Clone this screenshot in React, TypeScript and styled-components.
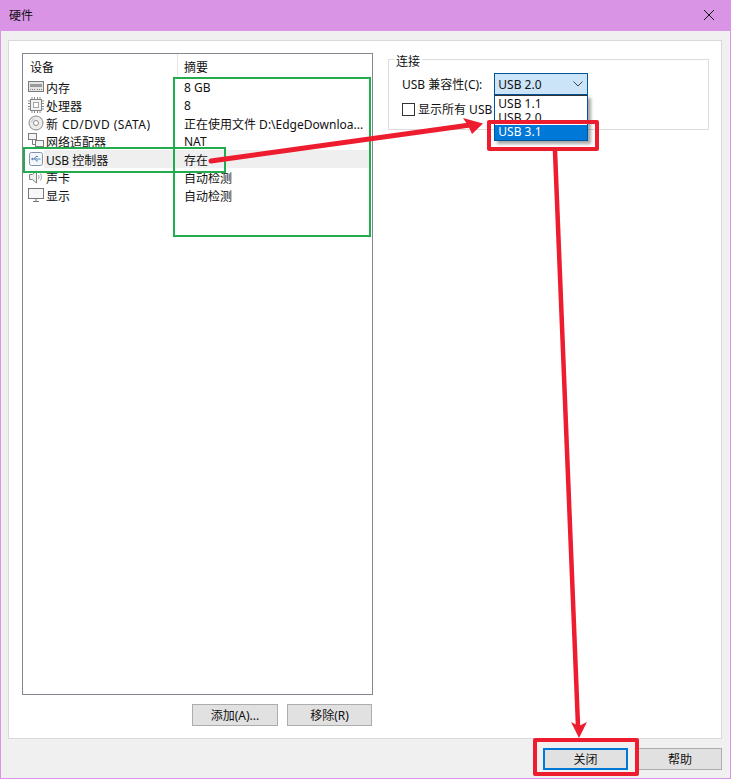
import React from 'react';
import styled, { createGlobalStyle } from 'styled-components';

const GlobalStyle = createGlobalStyle`
  html, body {
    margin: 0;
    padding: 0;
    background: #f0f0f0;
  }
  * {
    box-sizing: border-box;
  }
`;

const MemoryIcon = () => (
  <svg width="16" height="16" viewBox="0 0 16 16" fill="none">
    <rect x="0.5" y="2.5" width="15" height="10" fill="#e4e4e4" stroke="#7d7d7d" />
    <rect x="2" y="5" width="12" height="3" fill="#9a9a9a" />
    <path d="M2 10.5h1M4 10.5h1M6 10.5h1M9 10.5h1M11 10.5h1M13 10.5h1" stroke="#7d7d7d" />
  </svg>
);

const CpuIcon = () => (
  <svg width="16" height="16" viewBox="0 0 16 16" fill="none">
    <rect x="2.5" y="2.5" width="11" height="11" fill="#f2f2f2" stroke="#858585" />
    <rect x="5.5" y="5.5" width="5" height="5" fill="#fff" stroke="#a5a5a5" />
    <path
      d="M4 0v2M6.500 0v2M9.500 0v2M12 0v2M4 14v2M6.500 14v2M9.500 14v2M12 14v2M0 4h2M0 6.500h2M0 9.500h2M0 12h2M14 4h2M14 6.500h2M14 9.500h2M14 12h2"
      stroke="#8c8c8c"
    />
  </svg>
);

const DiscIcon = () => (
  <svg width="16" height="16" viewBox="0 0 16 16" fill="none">
    <circle cx="8" cy="8" r="7" fill="#ececec" stroke="#8a8a8a" />
    <circle cx="8" cy="8" r="2.500" fill="#fff" stroke="#8a8a8a" />
    <path d="M3.500 7a4.500 4.500 0 0 1 3-3.500" stroke="#bdbdbd" />
  </svg>
);

const NetworkIcon = () => (
  <svg width="16" height="16" viewBox="0 0 16 16" fill="none">
    <rect x="0.5" y="0.5" width="8" height="6" fill="#f4f4f4" stroke="#7d7d7d" />
    <rect x="7.500" y="7.500" width="8" height="6" fill="#f4f4f4" stroke="#7d7d7d" />
    <path d="M4.500 6.500v5h3M2 14.500h5M11.500 13.500v2" stroke="#7d7d7d" />
  </svg>
);

const UsbIcon = () => (
  <svg width="16" height="16" viewBox="0 0 16 16" fill="none">
    <rect x="1.500" y="1.500" width="13" height="13" rx="2" fill="#f3f7fb" stroke="#7f95ad" />
    <path d="M3.500 8h9M6 8l2-2.500h2M7 8l1.500 2h1.500" stroke="#5b86b3" />
    <path d="M3 8l2-1.500v3z" fill="#5b86b3" />
  </svg>
);

const SpeakerIcon = () => (
  <svg width="16" height="16" viewBox="0 0 16 16" fill="none">
    <path d="M1.500 5.500h3l4-3.500v12l-4-3.500h-3z" fill="#f0f0f0" stroke="#858585" />
    <path d="M10.500 6c.7 1.300.7 2.700 0 4M12.500 4.500c1.200 2.200 1.200 4.800 0 7" stroke="#a0a0a0" />
  </svg>
);

const MonitorIcon = () => (
  <svg width="16" height="16" viewBox="0 0 16 16" fill="none">
    <rect x="0.500" y="1.500" width="15" height="10" fill="#f7f7f7" stroke="#777" />
    <path d="M5 14.500h6M8 11.500v3" stroke="#777" />
  </svg>
);

const devices = [
  { icon: <MemoryIcon />, name: '内存', summary: '8 GB' },
  { icon: <CpuIcon />, name: '处理器', summary: '8' },
  { icon: <DiscIcon />, name: '新 CD/DVD (SATA)', summary: '正在使用文件 D:\\EdgeDownloa...', wide: true },
  { icon: <NetworkIcon />, name: '网络适配器', summary: 'NAT' },
  { icon: <UsbIcon />, name: 'USB 控制器', summary: '存在', selected: true },
  { icon: <SpeakerIcon />, name: '声卡', summary: '自动检测' },
  { icon: <MonitorIcon />, name: '显示', summary: '自动检测' },
];

export default function App() {
  return (
    <>
      <GlobalStyle />
      <Win>
        <TitleBar>
          <span>硬件</span>
          <svg width="12" height="12" viewBox="0 0 12 12" fill="none">
            <path d="M1 1l10 10M11 1L1 11" stroke="#111" />
          </svg>
        </TitleBar>
        <Body>
          <Panel>
            <LeftCol>
              <DeviceList>
                <HeaderRow>
                  <HeaderCell>设备</HeaderCell>
                  <HeaderCell $second>摘要</HeaderCell>
                </HeaderRow>
                {devices.map((d) => (
                  <Row key={d.name}>
                    <IconSlot>{d.icon}</IconSlot>
                    <RowBand $selected={d.selected}>
                      <NameCell $wide={d.wide}>{d.name}</NameCell>
                      <SummaryCell>{d.summary}</SummaryCell>
                    </RowBand>
                  </Row>
                ))}
              </DeviceList>
              <ListButtons>
                <Btn $w={86}>添加(A)...</Btn>
                <Btn>移除(R)</Btn>
              </ListButtons>
            </LeftCol>
            <Group>
              <Legend>连接</Legend>
              <ComboRow>
                <span>USB 兼容性(C):</span>
                <Combo>
                  <span>USB 2.0</span>
                  <svg width="10" height="6" viewBox="0 0 10 6" fill="none">
                    <path d="M0.500 0.500L5 5l4.500-4.500" stroke="#444" />
                  </svg>
                  <Popup>
                    <PopupItem>USB 1.1</PopupItem>
                    <PopupItem>USB 2.0</PopupItem>
                    <PopupItem $active>USB 3.1</PopupItem>
                  </Popup>
                </Combo>
              </ComboRow>
              <CheckRow>
                <CheckBox />
                <span>显示所有 USB 输入设备</span>
              </CheckRow>
            </Group>
          </Panel>
          <Footer>
            <Btn $primary>关闭</Btn>
            <Btn $w={84}>帮助</Btn>
          </Footer>
        </Body>
        <GreenBox $x={173} $y={77} $w={198} $h={160} />
        <GreenBox $x={23} $y={147} $w={203} $h={26} />
        <RedBox $x={487} $y={120} $w={112} $h={31} />
        <RedBox $x={533} $y={738} $w={106} $h={38} />
        <ArrowLayer width="731" height="779" viewBox="0 0 731 779" fill="none">
          <path d="M211 161L470 125" stroke="#ed1c2e" strokeWidth="5" strokeLinecap="round" />
          <path d="M483 123.500L463 118L468 125.500L472 134z" fill="#ed1c2e" />
          <path d="M555 151L578 726" stroke="#ed1c2e" strokeWidth="4.500" />
          <path d="M579 738L571 722L579 726L587 722z" fill="#ed1c2e" />
        </ArrowLayer>
      </Win>
    </>
  );
}

const Win = styled.div`
  position: relative;
  display: flex;
  flex-direction: column;
  width: 731px;
  height: 779px;
  overflow: hidden;
  background: #f0f0f0;
  border: 1px solid #da94e6;
  border-top: 0;
  font-family: 'Noto Sans', 'Noto Sans CJK SC', sans-serif;
  font-size: 12px;
  color: #111;
`;

const TitleBar = styled.div`
  display: flex;
  flex: 0 0 31px;
  align-items: center;
  justify-content: space-between;
  margin: 0 -1px;
  padding: 0 16px 2px 9px;
  background: #da94e6;
  font-size: 12px;
`;

const Body = styled.div`
  display: flex;
  flex: 1;
  flex-direction: column;
  padding: 9px 8px 0 7px;
`;

const Panel = styled.div`
  display: grid;
  grid-template-columns: 351px 321px;
  column-gap: 15px;
  height: 699px;
  padding: 12px 0 0 13px;
  background: #fff;
  border: 1px solid #d9d9d9;
`;

const LeftCol = styled.div`
  display: flex;
  flex-direction: column;
  gap: 9px;
`;

const DeviceList = styled.div`
  height: 642px;
  padding: 0 2px 0 0;
  background: #fff;
  border: 1px solid #828790;
`;

const HeaderRow = styled.div`
  display: flex;
  height: 24px;
`;

const HeaderCell = styled.div<{ $second?: boolean }>`
  display: flex;
  align-items: center;
  width: ${(p) => (p.$second ? '191px' : '154px')};
  padding-left: ${(p) => (p.$second ? '6px' : '7px')};
  padding-top: 2px;
  border-left: ${(p) => (p.$second ? '1px solid #e5e5e5' : '0')};
`;

const Row = styled.div`
  display: flex;
  height: 18px;
  align-items: center;
`;

const IconSlot = styled.div`
  display: flex;
  flex: 0 0 21px;
  justify-content: flex-end;
`;

const RowBand = styled.div<{ $selected?: boolean }>`
  display: flex;
  flex: 1;
  height: 18px;
  align-items: center;
  padding-top: 1px;
  background: ${(p) => (p.$selected ? '#efefef' : 'transparent')};
`;

const NameCell = styled.div<{ $wide?: boolean }>`
  width: 140px;
  padding-left: 2px;
  letter-spacing: ${(p) => (p.$wide ? '0.45px' : '0')};
  white-space: nowrap;
`;

const SummaryCell = styled.div`
  white-space: nowrap;
`;

const ListButtons = styled.div`
  display: flex;
  justify-content: flex-end;
  gap: 9px;
  padding-right: 1px;
`;

const Btn = styled.button<{ $primary?: boolean; $w?: number }>`
  width: ${(p) => p.$w ?? 85}px;
  height: 22px;
  padding: 0;
  font: inherit;
  color: #111;
  background: #e1e1e1;
  border: ${(p) => (p.$primary ? '2px solid #0078d7' : '1px solid #adadad')};
`;

const Group = styled.div`
  position: relative;
  display: flex;
  flex-direction: column;
  height: 71px;
  margin-top: 6px;
  padding: 13px 13px 0;
  border: 1px solid #dcdcdc;
`;

const Legend = styled.div`
  position: absolute;
  top: -8px;
  left: 5px;
  padding: 0 2px;
  background: #fff;
`;

const ComboRow = styled.div`
  display: flex;
  align-items: center;
  gap: 12px;
`;

const Combo = styled.div`
  position: relative;
  display: flex;
  align-items: center;
  justify-content: space-between;
  width: 94px;
  height: 22px;
  padding: 0 4px 0 3px;
  background: #cce4f7;
  border: 1px solid #005499;
`;

const Popup = styled.div`
  position: absolute;
  top: 21px;
  left: -1px;
  width: 94px;
  padding-top: 1px;
  background: #fff;
  border: 1px solid #005499;
  border-top-color: #333;
  box-shadow: 3px 3px 3px rgba(0, 0, 0, 0.35);
`;

const PopupItem = styled.div<{ $active?: boolean }>`
  height: ${(p) => (p.$active ? '15px' : '14px')};
  padding-left: 3px;
  line-height: 14px;
  color: ${(p) => (p.$active ? '#fff' : '#111')};
  background: ${(p) => (p.$active ? '#0078d7' : 'transparent')};
`;

const CheckRow = styled.div`
  display: flex;
  align-items: center;
  gap: 3px;
  margin-top: 5px;
  white-space: nowrap;
`;

const CheckBox = styled.div`
  width: 13px;
  height: 13px;
  background: #fff;
  border: 1px solid #333;
`;

const Footer = styled.div`
  display: flex;
  justify-content: flex-end;
  gap: 10px;
  padding-top: 9px;
`;

const GreenBox = styled.div<{ $x: number; $y: number; $w: number; $h: number }>`
  position: absolute;
  left: ${(p) => p.$x - 1}px;
  top: ${(p) => p.$y}px;
  width: ${(p) => p.$w}px;
  height: ${(p) => p.$h}px;
  border: 2px solid #22ac4e;
`;

const RedBox = styled.div<{ $x: number; $y: number; $w: number; $h: number }>`
  position: absolute;
  left: ${(p) => p.$x - 1}px;
  top: ${(p) => p.$y}px;
  width: ${(p) => p.$w}px;
  height: ${(p) => p.$h}px;
  border: 4px solid #ed1c2e;
  border-radius: 2px;
`;

const ArrowLayer = styled.svg`
  position: absolute;
  top: 0;
  left: -1px;
  pointer-events: none;
`;
